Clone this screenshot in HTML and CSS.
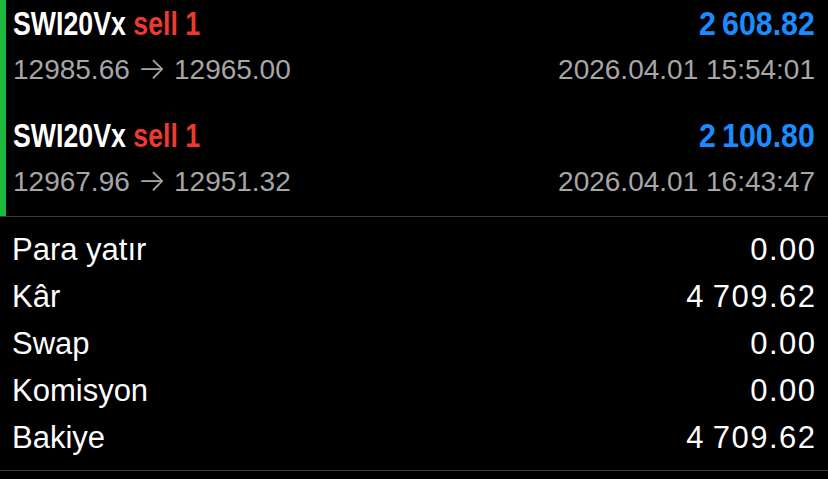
FILE: index.html
```html
<!DOCTYPE html>
<html lang="tr">
<head>
  <meta charset="UTF-8" />
  <meta name="viewport" content="width=device-width, initial-scale=1.0"/>
  <title>Geçmiş</title>
  <link rel="stylesheet" href="styles.css">
</head>
<body>

  <!-- Closed trades -->
  <div class="trades">
    <div class="trade">
      <div class="trade-top">
        <span class="symbol">SWI20Vx <span class="side">sell 1</span></span>
        <span class="profit">2&#8201;608.82</span>
      </div>
      <div class="trade-bottom">
        <span>12985.66 <span class="arrow">→</span> 12965.00</span>
        <span>2026.04.01 15:54:01</span>
      </div>
    </div>
    <div class="trade">
      <div class="trade-top">
        <span class="symbol">SWI20Vx <span class="side">sell 1</span></span>
        <span class="profit">2&#8201;100.80</span>
      </div>
      <div class="trade-bottom">
        <span>12967.96 <span class="arrow">→</span> 12951.32</span>
        <span>2026.04.01 16:43:47</span>
      </div>
    </div>
  </div>

  <!-- Totals -->
  <div class="summary">
    <div class="summary-row"><span>Para yatır</span><span class="value">0.00</span></div>
    <div class="summary-row"><span>Kâr</span><span class="value">4&#8201;709.62</span></div>
    <div class="summary-row"><span>Swap</span><span class="value">0.00</span></div>
    <div class="summary-row"><span>Komisyon</span><span class="value">0.00</span></div>
    <div class="summary-row"><span>Bakiye</span><span class="value">4&#8201;709.62</span></div>
  </div>

</body>
</html>
```

FILE: styles.css
```css
body {
  margin: 0;
  background-color: #000;
  color: #fff;
  font-family: "Liberation Sans", Arial, sans-serif;
}

.trades {
  border-left: 6px solid #1cba3c;
  padding: 1px 0 11px;
  display: flex;
  flex-direction: column;
  gap: 20px;
}

.trade {
  padding: 0 13px 0 7px;
}

.trade-top, .trade-bottom, .summary-row {
  display: flex;
  justify-content: space-between;
  align-items: baseline;
}

.trade-top {
  height: 46px;
  line-height: 46px;
  font-weight: bold;
  font-size: 33px;
}

/* condensed look of the bold headline */
.symbol {
  display: inline-block;
  transform: scaleX(0.81);
  transform-origin: left center;
  white-space: nowrap;
}

.side {
  color: #ec3a2e;
}

.profit {
  display: inline-block;
  color: #1a8cff;
  transform: scaleX(0.92);
  transform-origin: right center;
}

.trade-bottom {
  height: 46px;
  line-height: 46px;
  font-size: 28px;
  color: #a6a6a6;
}

.arrow {
  font-family: Inter, "DejaVu Sans", sans-serif;
  font-weight: 300;
  font-size: 30px;
  line-height: 1;
}

.summary {
  border-top: 1px solid #3a3a3a;
  border-bottom: 1px solid #3a3a3a;
  padding: 9px 13px 9px 12px;
}

.summary-row {
  height: 47px;
  line-height: 47px;
  font-size: 31px;
}

.summary-row .value {
  letter-spacing: 1.5px;
  margin-right: -1.5px;
}
```
